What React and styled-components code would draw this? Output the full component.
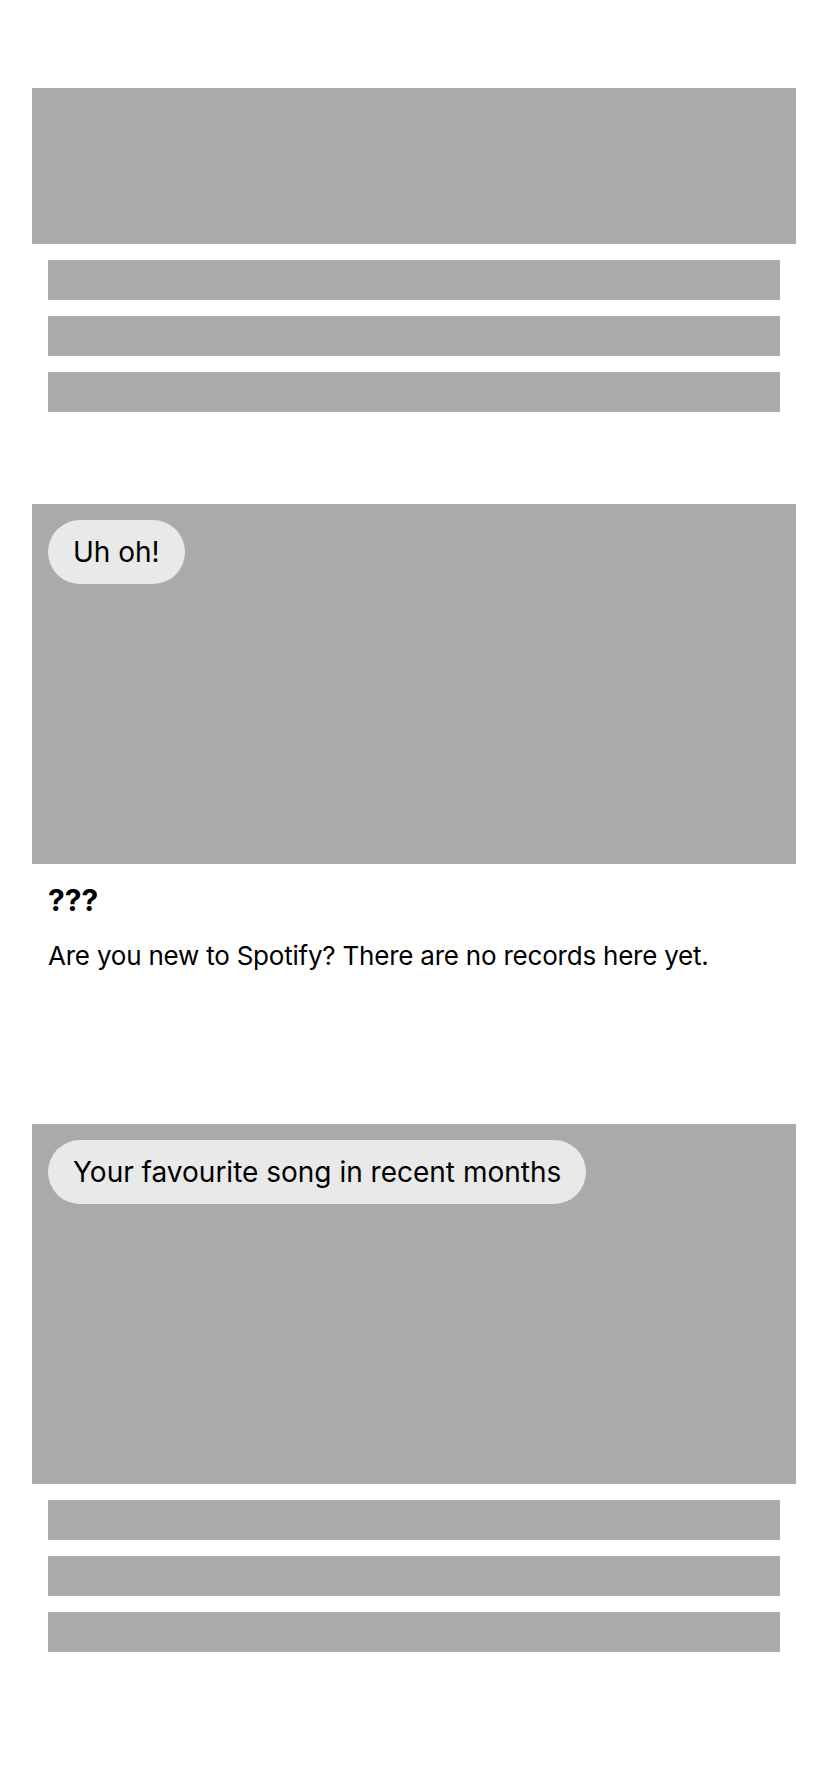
import React from "react";
import styled, { createGlobalStyle } from "styled-components";

const Global = createGlobalStyle`
  html, body { margin: 0; padding: 0; background: #ffffff; }
  body { font-family: Inter, "Noto Sans", "Liberation Sans", sans-serif; color: #000; }
`;

const Page = styled.main`
  display: flex;
  flex-direction: column;
  padding: 88px 32px 140px;
`;

const Section = styled.section`
  display: flex;
  flex-direction: column;
  margin-top: ${(p) => p.$top || 0}px;
`;

const Block = styled.div`
  background: #aaaaaa;
  height: ${(p) => p.$h}px;
  padding: 16px;
  box-sizing: border-box;
  display: flex;
  align-items: flex-start;
`;

const Pill = styled.div`
  display: inline-flex;
  align-items: center;
  height: 64px;
  padding: 0 25px;
  border-radius: 32px;
  background: #e9e9e9;
  font-size: 28px;
  font-weight: 400;
  white-space: nowrap;
`;

const BarList = styled.div`
  display: flex;
  flex-direction: column;
  gap: 16px;
  padding: 16px 16px 0;
`;

const Bar = styled.div`
  height: 40px;
  background: #aaaaaa;
`;

const TextArea = styled.div`
  padding: 0 16px;
  display: flex;
  flex-direction: column;
`;

const Heading = styled.h2`
  margin: 18px 0 0;
  font-size: 30px;
  line-height: 36px;
  font-weight: 700;
`;

const Body = styled.p`
  margin: 22px 0 0;
  font-size: 26px;
  line-height: 32px;
  font-weight: 400;
  letter-spacing: -0.22px;
`;

export default function App() {
  return (
    <>
      <Global />
      <Page>
        <Section>
          <Block $h={156} />
          <BarList>
            <Bar />
            <Bar />
            <Bar />
          </BarList>
        </Section>
        <Section $top={92}>
          <Block $h={360}>
            <Pill>Uh oh!</Pill>
          </Block>
          <TextArea>
            <Heading>???</Heading>
            <Body>Are you new to Spotify? There are no records here yet.</Body>
          </TextArea>
        </Section>
        <Section $top={152}>
          <Block $h={360}>
            <Pill>Your favourite song in recent months</Pill>
          </Block>
          <BarList>
            <Bar />
            <Bar />
            <Bar />
          </BarList>
        </Section>
      </Page>
    </>
  );
}
